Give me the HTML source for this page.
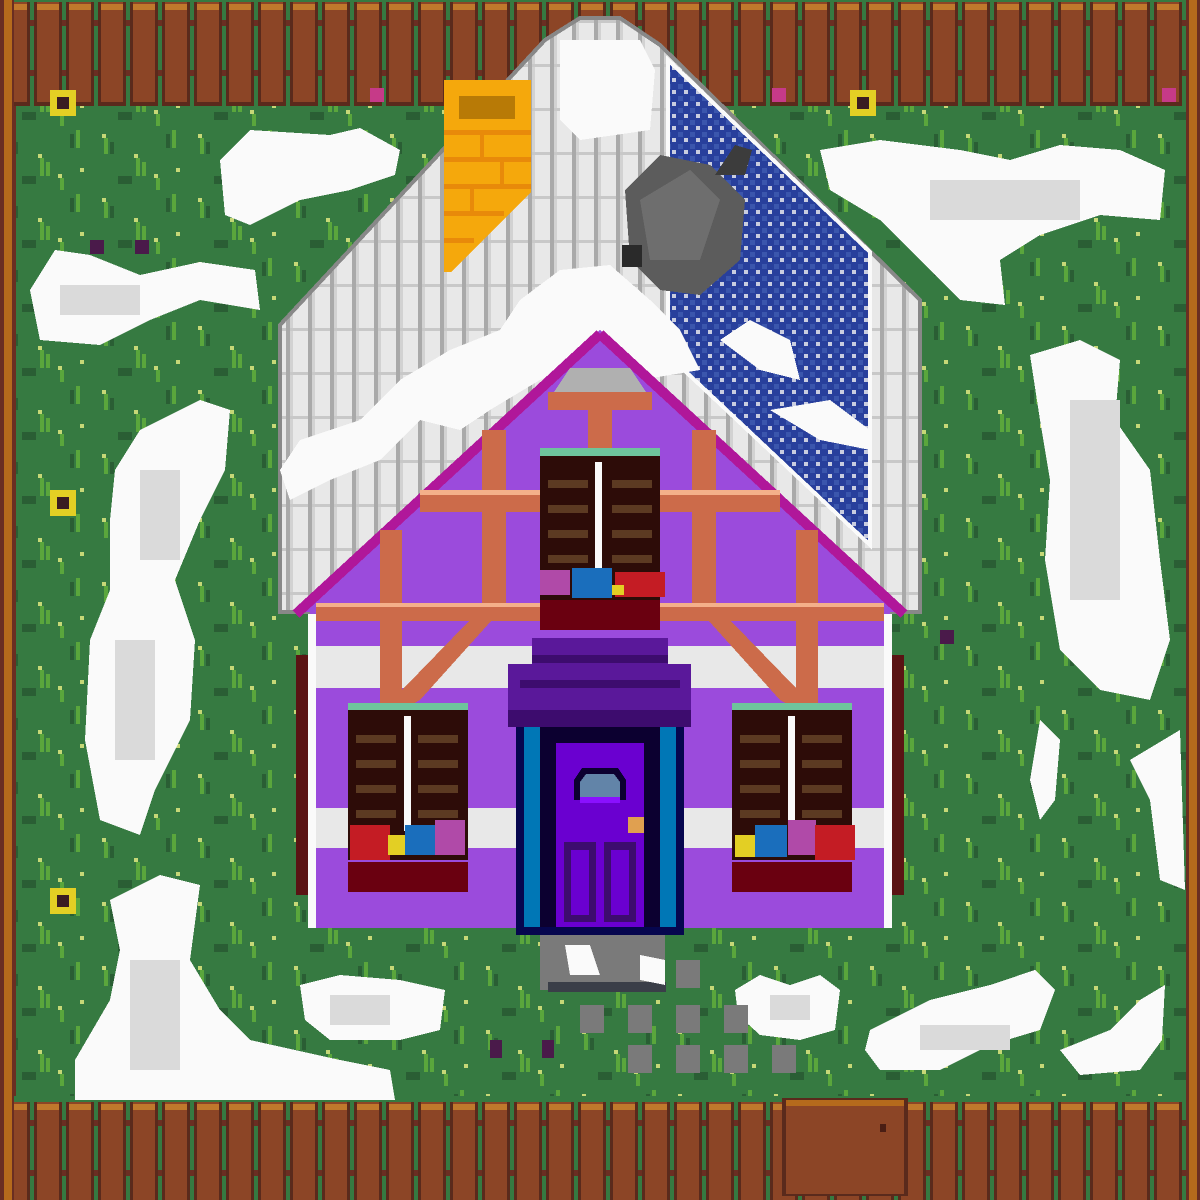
<!DOCTYPE html>
<html><head><meta charset="utf-8"><style>html,body{margin:0;padding:0;background:#357a40}svg{display:block}</style></head><body>
<svg width="1200" height="1200" viewBox="0 0 1200 1200" xmlns="http://www.w3.org/2000/svg" shape-rendering="crispEdges">
<defs>
<pattern id="grass" width="96" height="64" patternUnits="userSpaceOnUse">
<rect width="96" height="64" fill="#367a41"/>
<rect x="8" y="10" width="4" height="16" fill="#5aa63c"/><rect x="14" y="14" width="4" height="12" fill="#2a5e34"/>
<rect x="6" y="6" width="4" height="4" fill="#c6d877"/><rect x="40" y="30" width="4" height="18" fill="#5aa63c"/>
<rect x="46" y="34" width="4" height="14" fill="#5aa63c"/><rect x="38" y="26" width="4" height="4" fill="#c6d877"/>
<rect x="70" y="6" width="4" height="14" fill="#2a5e34"/><rect x="76" y="2" width="4" height="18" fill="#5aa63c"/>
<rect x="80" y="40" width="4" height="4" fill="#c6d877"/><rect x="22" y="48" width="14" height="8" fill="#2a5e34"/>
<rect x="60" y="50" width="4" height="12" fill="#5aa63c"/><rect x="58" y="46" width="4" height="4" fill="#c6d877"/>
</pattern>
<pattern id="roofp" width="22" height="44" patternUnits="userSpaceOnUse">
<rect width="22" height="44" fill="#e8e8e8"/><rect x="0" width="4" height="44" fill="#a9a9a9"/><rect x="4" width="3" height="44" fill="#d2d2d2"/><rect x="4" y="20" width="18" height="3" fill="#c8c8c8"/>
</pattern>
<pattern id="panel" width="12" height="12" patternUnits="userSpaceOnUse">
<rect width="12" height="12" fill="#283f9c"/><rect x="6" y="0" width="5" height="5" fill="#3b56ad"/><rect x="0" y="6" width="4" height="4" fill="#c9cde0"/>
</pattern>
<pattern id="fence" width="32" height="110" patternUnits="userSpaceOnUse">
<rect width="32" height="110" fill="#367a41"/>
<rect x="0" y="20" width="32" height="6" fill="#6a2e22"/><rect x="0" y="70" width="32" height="6" fill="#6a2e22"/>
<rect x="2" y="2" width="28" height="104" fill="#5a2a1c"/>
<rect x="5" y="2" width="22" height="100" fill="#8c4526"/>
<rect x="5" y="4" width="22" height="6" fill="#c0782c"/>
</pattern>
</defs>
<rect width="1200" height="1200" fill="url(#grass)"/>
<rect x="0" y="0" width="16" height="1200" fill="#6a2e22"/><rect x="4" y="0" width="8" height="1200" fill="#b56a1c"/>
<rect x="1186" y="0" width="14" height="1200" fill="#6a2e22"/><rect x="1189" y="0" width="8" height="1200" fill="#b56a1c"/>
<rect x="14" y="0" width="1172" height="106" fill="url(#fence)"/>
<rect x="14" y="1096" width="1172" height="104" fill="url(#fence)"/>
<rect x="782" y="1098" width="126" height="98" fill="#5a2a1c"/><rect x="786" y="1100" width="118" height="94" fill="#8c4526"/><rect x="786" y="1100" width="118" height="6" fill="#b56a1c"/><rect x="880" y="1124" width="6" height="8" fill="#4a1e14"/>
<g fill="#e3cf24"><rect x="50" y="90" width="26" height="26"/><rect x="850" y="90" width="26" height="26"/><rect x="50" y="490" width="26" height="26"/><rect x="50" y="888" width="26" height="26"/><rect x="452" y="890" width="26" height="26"/><rect x="848" y="890" width="26" height="26"/></g>
<g fill="#3a1c22"><rect x="57" y="97" width="12" height="12"/><rect x="857" y="97" width="12" height="12"/><rect x="57" y="497" width="12" height="12"/><rect x="57" y="895" width="12" height="12"/><rect x="459" y="897" width="12" height="12"/><rect x="855" y="897" width="12" height="12"/></g>
<g fill="#fafafa">
<path d="M220 160 L250 130 L330 135 L360 128 L400 150 L395 175 L350 190 L300 200 L250 225 L225 215Z"/>
<path d="M30 290 L55 250 L90 255 L140 275 L200 262 L255 270 L260 310 L200 300 L150 320 L100 345 L40 340Z"/>
<path d="M115 470 L140 430 L200 400 L230 410 L225 470 L200 520 L175 580 L195 640 L190 720 L155 790 L140 835 L100 820 L85 740 L90 640 L110 590 L110 520Z"/>
<path d="M110 900 L160 875 L200 885 L190 960 L220 1010 L250 1040 L340 1060 L390 1070 L395 1100 L75 1100 L75 1060 L110 1000 L120 950Z"/>
<path d="M820 150 L880 140 L960 150 L1010 160 L1060 145 L1120 150 L1165 170 L1160 220 L1100 215 L1040 235 L1000 260 L1005 305 L960 300 L920 260 L880 220 L830 190Z"/>
<path d="M1030 355 L1080 340 L1120 360 L1115 420 L1150 470 L1160 560 L1170 640 L1150 700 L1100 690 L1060 650 L1045 560 L1050 480 L1040 420Z"/>
<path d="M1040 720 L1060 740 L1055 800 L1040 820 L1030 780Z"/>
<path d="M1130 760 L1180 730 L1185 890 L1160 880 L1150 800Z"/>
<path d="M300 985 L340 975 L400 980 L445 990 L440 1030 L400 1040 L330 1040 L305 1020Z"/>
<path d="M735 990 L760 975 L790 985 L820 975 L840 990 L835 1030 L800 1040 L760 1035 L738 1015Z"/>
<path d="M870 1030 L930 1000 L990 985 L1035 970 L1055 990 L1040 1030 L990 1045 L940 1070 L880 1070 L865 1050Z"/>
<path d="M1060 1050 L1110 1030 L1140 1000 L1165 985 L1162 1040 L1140 1070 L1080 1075Z"/>
</g>
<g fill="#dadada">
<rect x="140" y="470" width="40" height="90"/><rect x="115" y="640" width="40" height="120"/><rect x="130" y="960" width="50" height="110"/><rect x="1070" y="400" width="50" height="200"/><rect x="930" y="180" width="150" height="40"/><rect x="60" y="285" width="80" height="30"/><rect x="330" y="995" width="60" height="30"/><rect x="770" y="995" width="40" height="25"/><rect x="920" y="1025" width="90" height="25"/>
</g>
<g fill="#7a7a7a">
<rect x="540" y="930" width="125" height="60"/>
<rect x="580" y="1005" width="24" height="28"/><rect x="628" y="1005" width="24" height="28"/><rect x="676" y="1005" width="24" height="28"/><rect x="724" y="1005" width="24" height="28"/>
<rect x="628" y="1045" width="24" height="28"/><rect x="676" y="1045" width="24" height="28"/><rect x="724" y="1045" width="24" height="28"/><rect x="772" y="1045" width="24" height="28"/>
<rect x="676" y="960" width="24" height="28"/>
</g>
<rect x="548" y="982" width="118" height="10" fill="#3a3e48"/>
<path d="M565 945 L590 945 L600 975 L570 975Z M640 955 L665 960 L665 985 L640 980Z" fill="#fafafa"/>
<path d="M280 612 L280 325 L545 40 L580 18 L620 18 L660 45 L920 300 L920 612Z" fill="url(#roofp)" stroke="#888" stroke-width="4"/>
<path d="M668 60 L870 252 L870 545 L668 355Z" fill="url(#panel)" stroke="#fafafa" stroke-width="4"/>
<g fill="#fafafa">
<path d="M560 40 L640 40 L655 70 L650 130 L580 140 L560 120Z"/>
<path d="M280 470 L300 440 L360 420 L400 380 L450 350 L500 330 L520 300 L560 270 L610 265 L650 300 L680 330 L700 370 L640 380 L600 350 L540 380 L490 410 L460 430 L420 420 L380 460 L330 480 L290 500Z"/>
<path d="M720 340 L750 320 L790 340 L800 380 L760 370Z"/>
<path d="M770 410 L830 400 L870 430 L870 450 L820 440Z"/>
</g>
<path d="M444 80 L531 80 L531 192 L451 272 L444 272Z" fill="#f5a80c"/>
<rect x="459" y="96" width="56" height="23" fill="#b87a06"/>
<g fill="#e88a0a"><rect x="444" y="130" width="87" height="5"/><rect x="444" y="157" width="87" height="5"/><rect x="444" y="184" width="87" height="5"/><rect x="444" y="211" width="60" height="5"/><rect x="444" y="238" width="30" height="5"/><rect x="480" y="135" width="4" height="22"/><rect x="500" y="162" width="4" height="22"/><rect x="470" y="189" width="4" height="22"/></g>
<path d="M625 190 L660 155 L710 165 L745 200 L740 260 L700 295 L660 290 L630 260Z" fill="#5c5c5c"/>
<path d="M640 200 L690 170 L720 200 L700 260 L650 260Z" fill="#6e6e6e"/>
<path d="M715 175 L735 145 L752 150 L745 175 Z" fill="#3c3c3c"/>
<rect x="622" y="245" width="20" height="22" fill="#2a2a2a"/>
<path d="M600 330 L300 612 L900 612Z" fill="#9b4bdc"/>
<path d="M600 334 L296 614 M600 334 L904 614" stroke="#b0179a" stroke-width="10" fill="none"/>
<path d="M570 368 L630 368 L648 395 L552 395Z" fill="#b0b0b0"/>
<rect x="310" y="612" width="580" height="316" fill="#9b4bdc"/>
<rect x="316" y="646" width="568" height="42" fill="#e8e8e8"/>
<rect x="316" y="808" width="568" height="40" fill="#e8e8e8"/>
<rect x="308" y="614" width="8" height="314" fill="#fafafa"/><rect x="884" y="614" width="8" height="314" fill="#fafafa"/>
<rect x="296" y="655" width="12" height="240" fill="#5a1414"/><rect x="892" y="655" width="12" height="240" fill="#5a1414"/>
<g fill="#cc6b4a">
<rect x="316" y="603" width="568" height="18"/>
<rect x="420" y="490" width="360" height="22"/>
<rect x="588" y="392" width="24" height="110"/>
<rect x="482" y="430" width="24" height="190"/><rect x="692" y="430" width="24" height="190"/>
<rect x="380" y="530" width="22" height="180"/><rect x="796" y="530" width="22" height="180"/>
<rect x="548" y="392" width="104" height="18"/>
<path d="M402 690 L470 620 L492 620 L420 700 L402 710Z"/>
<path d="M798 690 L730 620 L708 620 L780 700 L798 710Z"/>
</g>
<rect x="420" y="490" width="360" height="5" fill="#f4b08a"/>
<rect x="316" y="603" width="568" height="4" fill="#f4b08a"/>
<rect x="540" y="448" width="120" height="8" fill="#6ec49c"/>
<rect x="540" y="456" width="120" height="150" fill="#2d0c08"/>
<rect x="595" y="462" width="7" height="125" fill="#fafafa"/>
<g fill="#5c3a22"><rect x="548" y="480" width="40" height="8"/><rect x="612" y="480" width="40" height="8"/><rect x="548" y="505" width="40" height="8"/><rect x="612" y="505" width="40" height="8"/><rect x="548" y="530" width="40" height="8"/><rect x="612" y="530" width="40" height="8"/><rect x="548" y="555" width="40" height="8"/><rect x="612" y="555" width="40" height="8"/></g>
<rect x="540" y="600" width="120" height="30" fill="#6a0010"/>
<rect x="540" y="570" width="30" height="25" fill="#b04aa8"/><rect x="572" y="568" width="40" height="30" fill="#1a6ebc"/><rect x="615" y="572" width="50" height="25" fill="#c41c24"/><rect x="612" y="585" width="12" height="10" fill="#e3cf24"/>
<g>
<rect x="348" y="703" width="120" height="7" fill="#6ec49c"/><rect x="348" y="710" width="120" height="150" fill="#2d0c08"/>
<rect x="404" y="716" width="7" height="115" fill="#fafafa"/>
<rect x="732" y="703" width="120" height="7" fill="#6ec49c"/><rect x="732" y="710" width="120" height="150" fill="#2d0c08"/>
<rect x="788" y="716" width="7" height="115" fill="#fafafa"/>
<g fill="#5c3a22"><rect x="356" y="735" width="40" height="8"/><rect x="418" y="735" width="40" height="8"/><rect x="356" y="760" width="40" height="8"/><rect x="418" y="760" width="40" height="8"/><rect x="356" y="785" width="40" height="8"/><rect x="418" y="785" width="40" height="8"/><rect x="356" y="810" width="40" height="8"/><rect x="418" y="810" width="40" height="8"/>
<rect x="740" y="735" width="40" height="8"/><rect x="802" y="735" width="40" height="8"/><rect x="740" y="760" width="40" height="8"/><rect x="802" y="760" width="40" height="8"/><rect x="740" y="785" width="40" height="8"/><rect x="802" y="785" width="40" height="8"/><rect x="740" y="810" width="40" height="8"/><rect x="802" y="810" width="40" height="8"/></g>
<rect x="348" y="862" width="120" height="30" fill="#6a0010"/><rect x="732" y="862" width="120" height="30" fill="#6a0010"/>
<rect x="350" y="825" width="40" height="35" fill="#c41c24"/><rect x="388" y="835" width="18" height="20" fill="#e3cf24"/><rect x="405" y="825" width="30" height="30" fill="#1a6ebc"/><rect x="435" y="820" width="30" height="35" fill="#b04aa8"/>
<rect x="735" y="835" width="22" height="22" fill="#e3cf24"/><rect x="755" y="825" width="32" height="32" fill="#1a6ebc"/><rect x="788" y="820" width="28" height="35" fill="#b04aa8"/><rect x="815" y="825" width="40" height="35" fill="#c41c24"/>
</g>
<path d="M532 638 L668 638 L668 664 L691 664 L691 727 L508 727 L508 664 L532 664Z" fill="#5a189a"/>
<g fill="#3d0c6e"><rect x="508" y="710" width="183" height="17"/><rect x="532" y="655" width="136" height="8"/><rect x="520" y="680" width="160" height="8"/></g>
<rect x="516" y="727" width="168" height="208" fill="#06064e"/>
<rect x="524" y="727" width="16" height="200" fill="#0077b6"/><rect x="660" y="727" width="16" height="200" fill="#0077b6"/>
<rect x="540" y="727" width="120" height="200" fill="#0c0030"/>
<rect x="556" y="743" width="88" height="184" fill="#6a00d0"/>
<path d="M574 800 L574 780 L582 768 L618 768 L626 780 L626 800Z" fill="#0c0030"/>
<path d="M580 797 L580 782 L586 774 L614 774 L620 782 L620 797Z" fill="#6284a8"/>
<rect x="580" y="797" width="40" height="6" fill="#8a10ff"/>
<rect x="628" y="817" width="16" height="16" fill="#e0a050"/>
<rect x="564" y="842" width="32" height="80" fill="#3d0c6e"/><rect x="604" y="842" width="32" height="80" fill="#3d0c6e"/>
<rect x="571" y="850" width="18" height="65" fill="#6a00d0"/><rect x="611" y="850" width="18" height="65" fill="#6a00d0"/>
<g fill="#4a1a4a"><rect x="90" y="240" width="14" height="14"/><rect x="135" y="240" width="14" height="14"/><rect x="490" y="1040" width="12" height="18"/><rect x="542" y="1040" width="12" height="18"/><rect x="940" y="630" width="14" height="14"/></g>
<g fill="#c63a88"><rect x="370" y="88" width="14" height="14"/><rect x="772" y="88" width="14" height="14"/><rect x="1162" y="88" width="14" height="14"/></g>
</svg>
</body></html>
